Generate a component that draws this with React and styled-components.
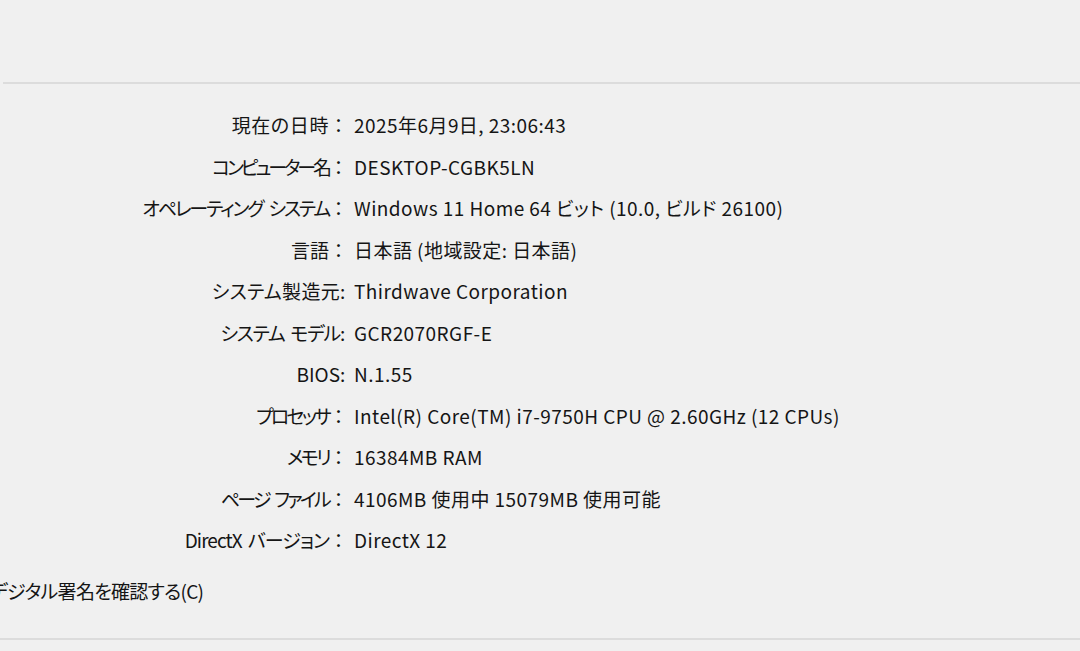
import styled, { createGlobalStyle } from "styled-components";

const GlobalStyle = createGlobalStyle`
  html, body {
    margin: 0;
    padding: 0;
    background: #f0f0f0;
  }
  body {
    font-family: "Noto Sans CJK JP", "Noto Sans", sans-serif;
    color: #151515;
  }
`;

const Window = styled.div`
  width: 1080px;
  height: 651px;
  overflow: hidden;
  background: #f0f0f0;
  display: flex;
  flex-direction: column;
`;

const TopSpace = styled.div`
  height: 82px;
  flex: none;
`;

const Rule = styled.div`
  height: 2px;
  flex: none;
  margin-left: ${(props) => props.indent || 0}px;
  background: #dcdcdc;
`;

const InfoGrid = styled.div`
  display: grid;
  grid-template-columns: 346px auto;
  column-gap: 8px;
  grid-auto-rows: 41.5px;
  align-items: center;
  padding-top: 20px;
  font-size: 19px;
`;

const Label = styled.div`
  display: flex;
  justify-content: flex-end;
  white-space: pre;
  font-feature-settings: "palt";
`;

// kana in the original UI font are much narrower than Noto's, so each
// label gets its own tracking
const LabelText = styled.span`
  letter-spacing: ${(props) => props.track}px;
  word-spacing: ${(props) => props.space || 0}px;
`;

const Colon = styled.span`
  display: inline-block;
  width: ${(props) => (props.wide ? "17px" : "6px")};
  text-align: ${(props) => (props.wide ? "center" : "left")};
  font-feature-settings: normal;
`;

const Value = styled.div`
  white-space: nowrap;
  letter-spacing: 0.45px;
  font-feature-settings: "palt";
`;

const CheckRow = styled.div`
  height: 50px;
  flex: none;
  display: flex;
  align-items: center;
  margin-top: 5px;
  margin-left: -10px;
  font-size: 19px;
  letter-spacing: -0.7px;
  white-space: nowrap;
  font-feature-settings: "palt";
`;

const Filler = styled.div`
  flex: 1;
`;

const BottomSpace = styled.div`
  height: 11px;
  flex: none;
`;

const rows = [
  ["現在の日時", 0.6, 0, true, "2025年6月9日, 23:06:43"],
  ["コンピューター名", -3.1, 0, true, "DESKTOP-CGBK5LN"],
  ["オペレーティング システム", -2.15, 4, true, "Windows 11 Home 64 ビット (10.0, ビルド 26100)"],
  ["言語", 0, 0, true, "日本語 (地域設定: 日本語)"],
  ["システム製造元", 0.3, 0, false, "Thirdwave Corporation"],
  ["システム モデル", -1.3, 3, false, "GCR2070RGF-E"],
  ["BIOS", 0, 0, false, "N.1.55"],
  ["プロセッサ", -2.8, 0, true, "Intel(R) Core(TM) i7-9750H CPU @ 2.60GHz (12 CPUs)"],
  ["メモリ", -2.7, 0, true, "16384MB RAM"],
  ["ページ ファイル", -2.75, 4, true, "4106MB 使用中 15079MB 使用可能"],
  ["DirectX バージョン", -0.95, 3, true, "DirectX 12"],
];

const App = () => {
  return (
    <>
      <GlobalStyle />
      <Window>
        <TopSpace />
        <Rule indent={3} />
        <InfoGrid>
          {rows.map(([label, track, space, wide, value]) => [
            <Label key={label}>
              <LabelText track={track} space={space}>
                {label}
              </LabelText>
              <Colon wide={wide}>{wide ? "：" : ":"}</Colon>
            </Label>,
            <Value key={label + "-v"}>{value}</Value>,
          ])}
        </InfoGrid>
        <CheckRow>デジタル署名を確認する(C)</CheckRow>
        <Filler />
        <Rule />
        <BottomSpace />
      </Window>
    </>
  );
};

export default App;
